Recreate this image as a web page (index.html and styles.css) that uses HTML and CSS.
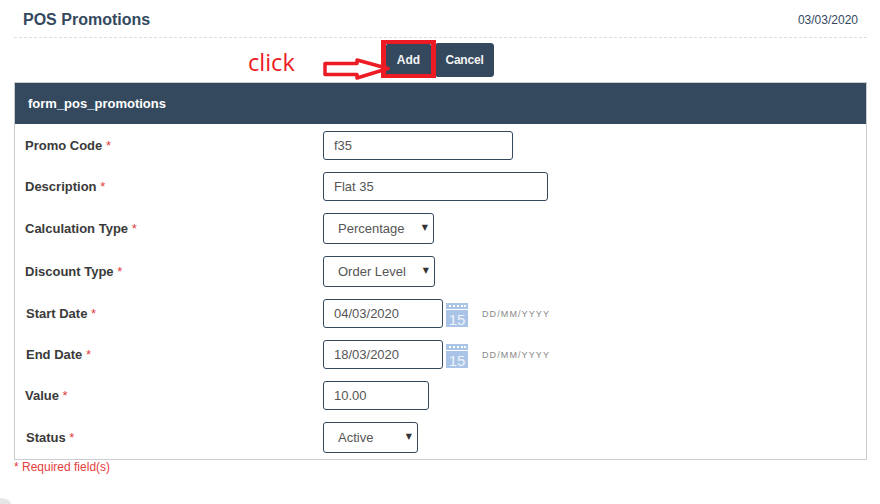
FILE: index.html
```html
<!DOCTYPE html>
<html>

<head>
  <meta charset="utf-8">
  <title>POS Promotions</title>
  <link rel="stylesheet" href="styles.css">
</head>

<body>
  <div class="page">
    <div class="title-bar">
      <h1>POS Promotions</h1>
      <span class="today">03/03/2020</span>
    </div>

    <div class="toolbar">
      <button class="btn btn-add">Add</button>
      <button class="btn btn-cancel">Cancel</button>
      <span class="click-note">click</span>
      <svg class="click-arrow" width="68" height="28" viewBox="0 0 68 28">
        <path d="M3 8.500H35V5L66 13.500L35 23V19.500H3Z" fill="#fff" stroke="#ed1c24" stroke-width="3.500" stroke-linejoin="round"/>
      </svg>
      <div class="click-box"></div>
    </div>

    <div class="panel">
      <div class="panel-head">form_pos_promotions</div>
      <div class="panel-body">
        <div class="row">
          <label>Promo Code <i>*</i></label>
          <input class="w-code" type="text" value="f35">
        </div>
        <div class="row">
          <label>Description <i>*</i></label>
          <input class="w-desc" type="text" value="Flat 35">
        </div>
        <div class="row row-select">
          <label>Calculation Type <i>*</i></label>
          <div class="select w-calc">
            <select><option>Percentage</option></select>
          </div>
        </div>
        <div class="row row-select">
          <label>Discount Type <i>*</i></label>
          <div class="select w-disc">
            <select><option>Order Level</option></select>
          </div>
        </div>
        <div class="row">
          <label class="nudge">Start Date <i>*</i></label>
          <input class="w-date" type="text" value="04/03/2020">
          <svg class="cal" width="22" height="24" viewBox="0 0 22 24">
            <rect y="0" width="22" height="6" fill="#a9c4e6"/>
            <path d="M3 2h2v2H3zM7 2h2v2H7zM11 2h2v2h-2zM15 2h2v2h-2zM18 2h2v2h-2z" fill="#fff"/>
            <rect y="7" width="22" height="17" fill="#a9c4e6"/>
            <text x="11" y="22" text-anchor="middle" class="cal-day">15</text>
          </svg>
          <span class="hint">DD/MM/YYYY</span>
        </div>
        <div class="row">
          <label class="nudge">End Date <i>*</i></label>
          <input class="w-date" type="text" value="18/03/2020">
          <svg class="cal" width="22" height="24" viewBox="0 0 22 24">
            <rect y="0" width="22" height="6" fill="#a9c4e6"/>
            <path d="M3 2h2v2H3zM7 2h2v2H7zM11 2h2v2h-2zM15 2h2v2h-2zM18 2h2v2h-2z" fill="#fff"/>
            <rect y="7" width="22" height="17" fill="#a9c4e6"/>
            <text x="11" y="22" text-anchor="middle" class="cal-day">15</text>
          </svg>
          <span class="hint">DD/MM/YYYY</span>
        </div>
        <div class="row">
          <label>Value <i>*</i></label>
          <input class="w-value" type="text" value="10.00">
        </div>
        <div class="row row-select">
          <label class="nudge">Status <i>*</i></label>
          <div class="select w-status">
            <select><option>Active</option></select>
          </div>
        </div>
      </div>
    </div>
    <div class="required">* Required field(s)</div>
  </div>
  <div class="corner"></div>
</body>

</html>
```

FILE: styles.css
```css
* {
  box-sizing: border-box;
}

body {
  margin: 0;
  background: #fff;
  font-family: "Liberation Sans", Arial, sans-serif;
  color: #3a3a3a;
}

.page {
  width: 867px;
  padding-left: 14px;
}

.title-bar {
  display: flex;
  justify-content: space-between;
  align-items: center;
  height: 38px;
  padding: 2px 9px 0;
  border-bottom: 1px dashed #ddd;
  color: #34495e;
}

.title-bar h1 {
  margin: 0;
  font-size: 16px;
  font-weight: bold;
}

.today {
  font-size: 12px;
}

/* buttons, the red note sits on top of them */
.toolbar {
  position: relative;
  display: flex;
  gap: 4px;
  height: 44px;
  padding: 5px 0 0 372px;
}

.btn {
  height: 34px;
  padding: 0;
  border: 1px solid #34495e;
  border-radius: 3px;
  background: #34495e;
  color: #f4f4f4;
  font: bold 12px "Liberation Sans", Arial, sans-serif;
}

.btn-add {
  width: 45px;
}

.btn-cancel {
  width: 59px;
  letter-spacing: -0.2px;
}

.click-note {
  position: absolute;
  left: 234px;
  top: 8px;
  font: 23.500px "Open Sans", sans-serif;
  color: #ed1c24;
}

.click-arrow {
  position: absolute;
  left: 308px;
  top: 17px;
}

.click-box {
  position: absolute;
  left: 367px;
  top: 2px;
  width: 55px;
  height: 38px;
  border: solid #ed1c24;
  border-width: 4px 5px;
}

.panel {
  border: 1px solid #ccc;
}

.panel-head {
  height: 41px;
  padding-left: 13px;
  line-height: 41px;
  background: #34495e;
  color: #fff;
  font-size: 13px;
  font-weight: bold;
}

.panel-body {
  padding: 7px 0 6px;
}

.row {
  display: flex;
  align-items: center;
  height: 29px;
  margin-bottom: 12px;
}

.row:last-child {
  margin-bottom: 0;
}

.row-select {
  height: 31px;
}

.row label {
  width: 308px;
  padding-left: 10px;
  font-size: 13px;
  font-weight: bold;
}

.row label.nudge {
  padding-left: 11px;
}

.row i {
  font-style: normal;
  font-weight: normal;
  color: #e43d3d;
}

input,
select {
  height: 100%;
  border: 1px solid #34495e;
  border-radius: 3px;
  background: #fff;
  color: #555;
  font: 13px "Liberation Sans", Arial, sans-serif;
}

input {
  height: 29px;
  padding: 0 10px;
}

.select {
  position: relative;
  height: 31px;
}

.select select {
  width: 100%;
  padding-left: 14px;
  appearance: none;
}

.select::after {
  content: "▼";
  position: absolute;
  right: 6px;
  top: 10px;
  font: 8px "DejaVu Sans", sans-serif;
  color: #333;
  pointer-events: none;
}

.w-code { width: 190px; }
.w-desc { width: 225px; }
.w-calc { width: 111px; }
.w-disc { width: 112px; }
.w-date { width: 120px; }
.w-value { width: 106px; }
.w-status { width: 95px; }

.cal {
  margin: 3px 0 0 3px;
}

.cal-day {
  font: 15px "Liberation Sans", Arial, sans-serif;
  fill: #eef3fa;
}

.hint {
  margin-left: 14px;
  font-size: 9px;
  letter-spacing: 1.1px;
  color: #888;
}

.required {
  font-size: 12px;
  color: #e43d3d;
}

/* bit of the window edge showing in the corner */
.corner {
  position: fixed;
  left: 0;
  bottom: 0;
  width: 11px;
  height: 6px;
  background: #e6e6e6;
  border-top-right-radius: 100%;
}
```
